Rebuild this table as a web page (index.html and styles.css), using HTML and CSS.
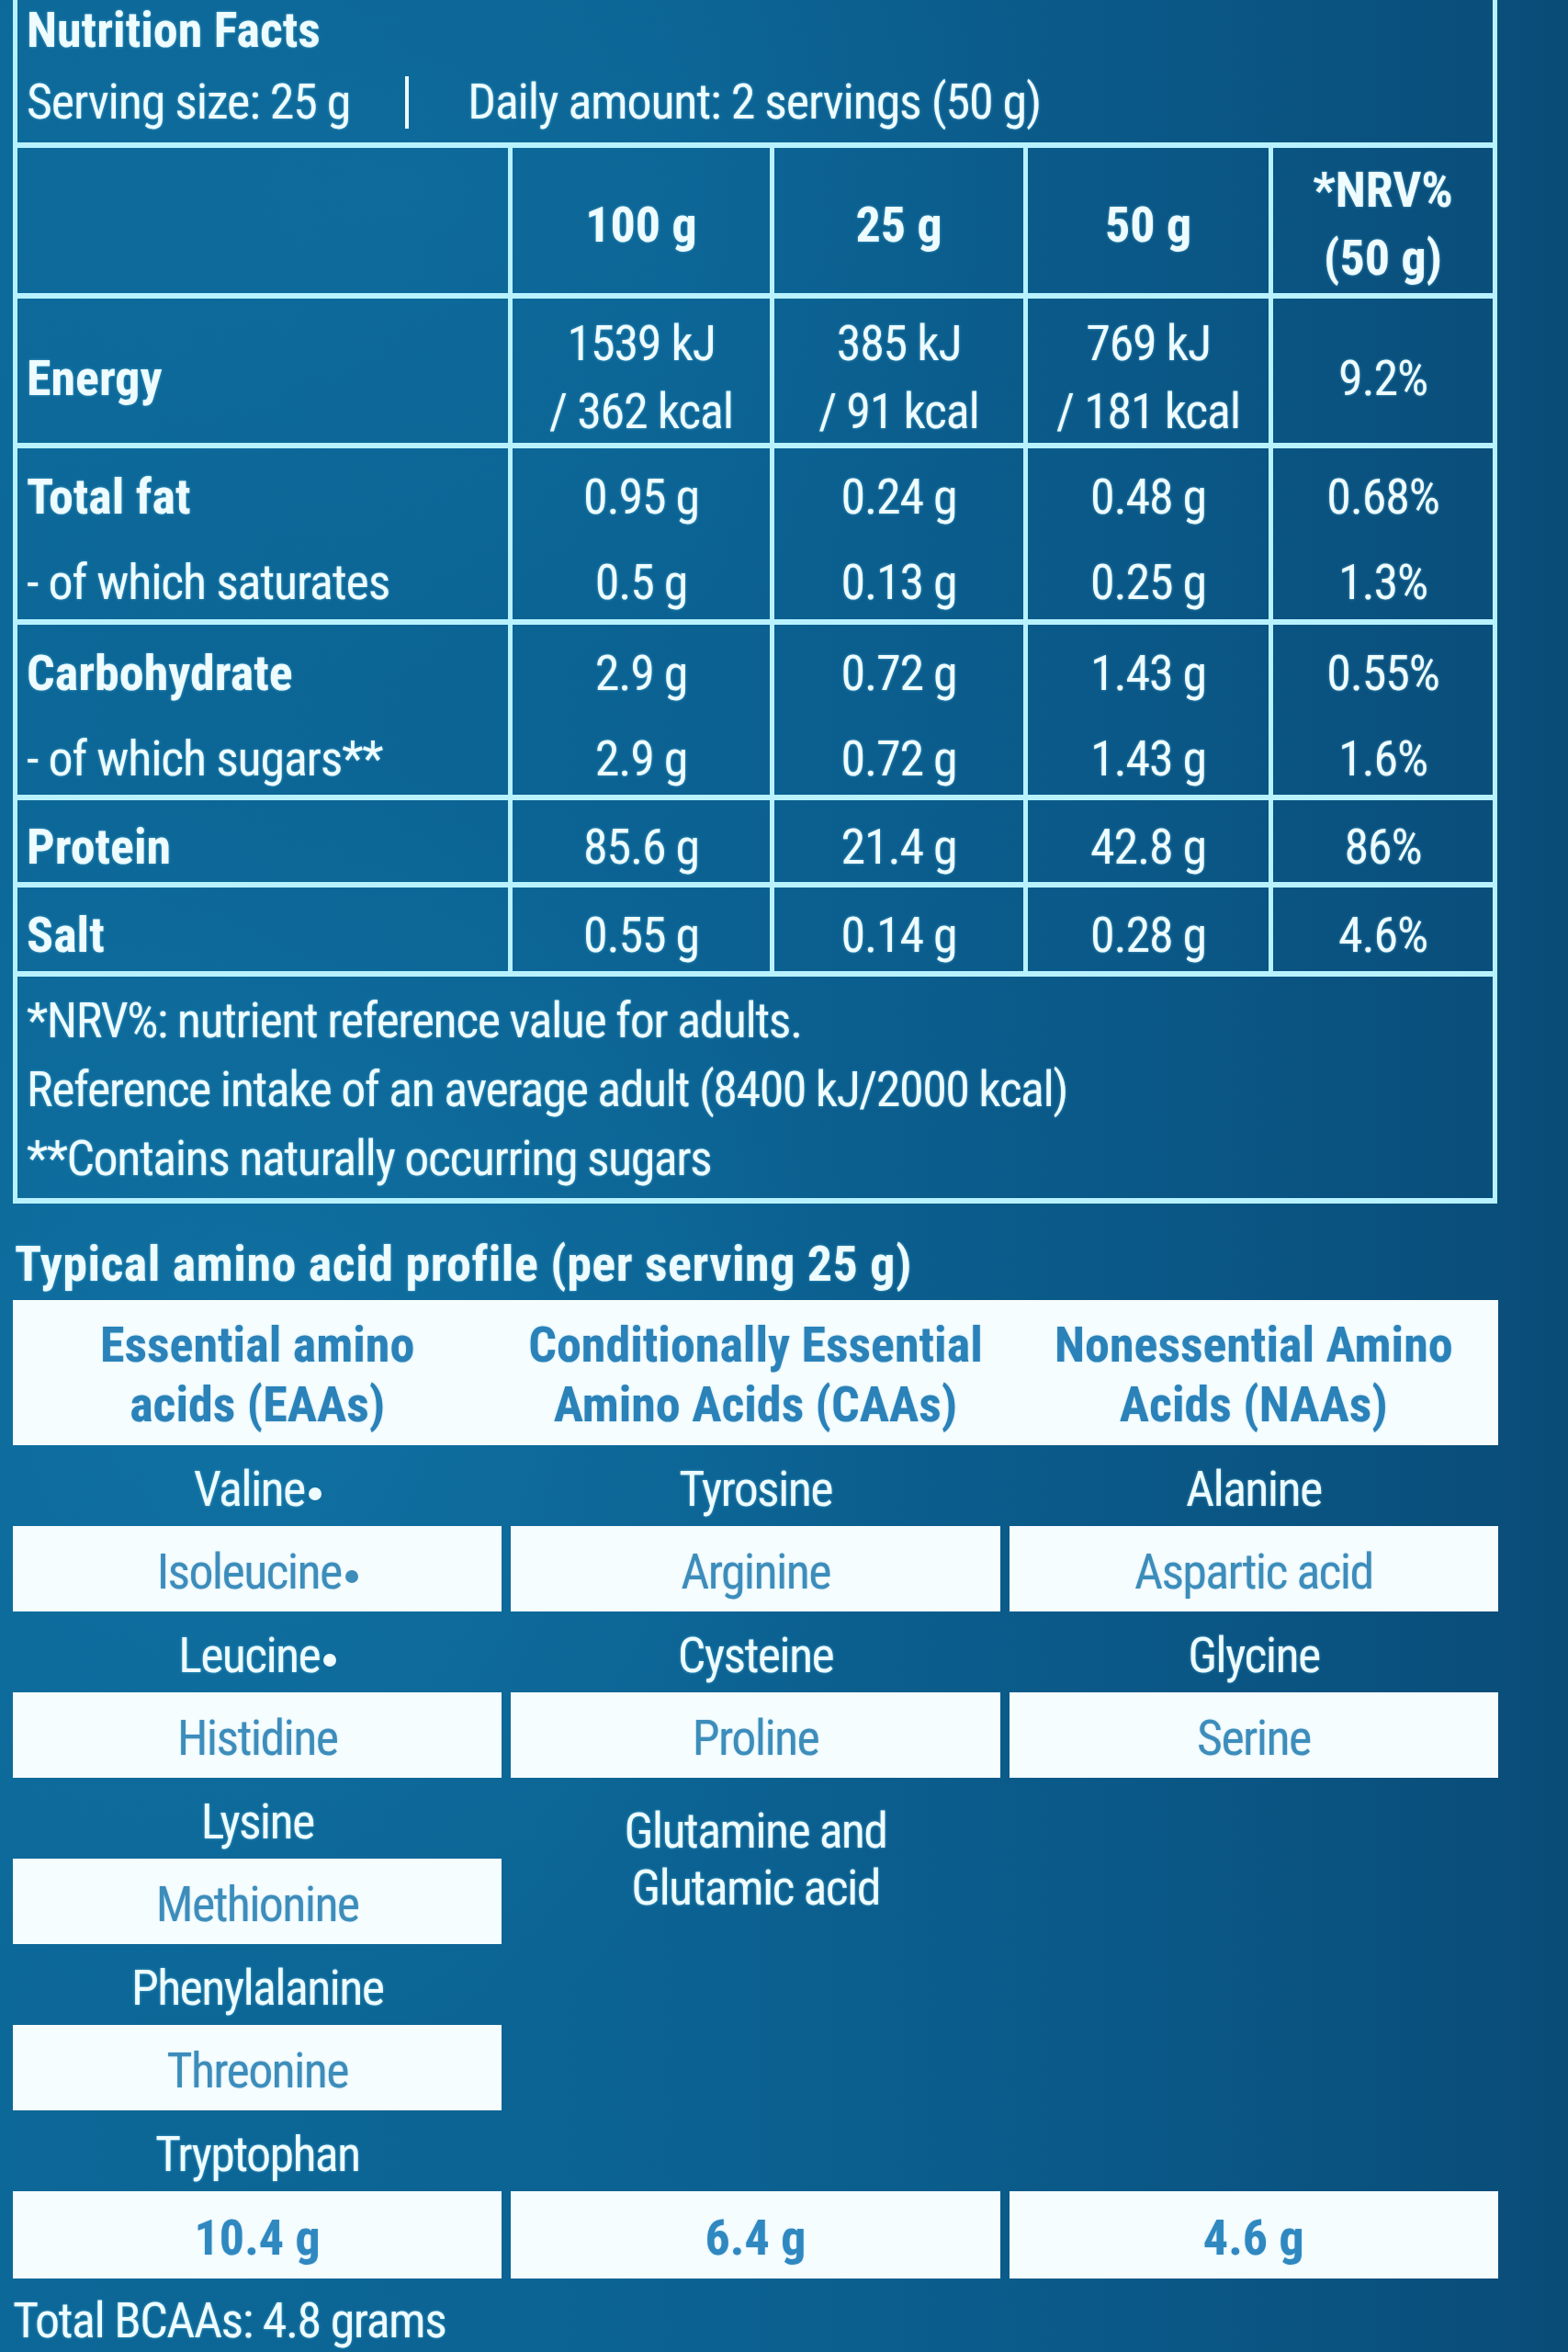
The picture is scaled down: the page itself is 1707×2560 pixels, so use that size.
FILE: index.html
```html
<!DOCTYPE html>
<html lang="en">
<head>
<meta charset="utf-8">
<title>Nutrition Facts</title>
<link rel="stylesheet" href="styles.css">
</head>
<body>
<div class="page">
  <section class="nf">
    <div class="nf-head">
      <div class="nf-title">Nutrition Facts</div>
      <div class="nf-serving">
        <span>Serving size: 25 g</span>
        <span class="sep"></span>
        <span>Daily amount: 2 servings (50 g)</span>
      </div>
    </div>

    <div class="row row-head">
      <div class="c lbl"></div>
      <div class="c b">100 g</div>
      <div class="c b">25 g</div>
      <div class="c b">50 g</div>
      <div class="c b two">*NRV%<br>(50 g)</div>
    </div>

    <div class="row row-energy">
      <div class="c lbl b">Energy</div>
      <div class="c two">1539 kJ<br>/ 362 kcal</div>
      <div class="c two">385 kJ<br>/ 91 kcal</div>
      <div class="c two">769 kJ<br>/ 181 kcal</div>
      <div class="c">9.2%</div>
    </div>

    <div class="grp">
      <div class="row sub sub-a">
        <div class="c lbl b">Total fat</div>
        <div class="c">0.95 g</div>
        <div class="c">0.24 g</div>
        <div class="c">0.48 g</div>
        <div class="c">0.68%</div>
      </div>
      <div class="row sub sub-a">
        <div class="c lbl">- of which saturates</div>
        <div class="c">0.5 g</div>
        <div class="c">0.13 g</div>
        <div class="c">0.25 g</div>
        <div class="c">1.3%</div>
      </div>
    </div>

    <div class="grp">
      <div class="row sub sub-a">
        <div class="c lbl b">Carbohydrate</div>
        <div class="c">2.9 g</div>
        <div class="c">0.72 g</div>
        <div class="c">1.43 g</div>
        <div class="c">0.55%</div>
      </div>
      <div class="row sub sub-b">
        <div class="c lbl">- of which sugars**</div>
        <div class="c">2.9 g</div>
        <div class="c">0.72 g</div>
        <div class="c">1.43 g</div>
        <div class="c">1.6%</div>
      </div>
    </div>

    <div class="row row-protein">
      <div class="c lbl b">Protein</div>
      <div class="c">85.6 g</div>
      <div class="c">21.4 g</div>
      <div class="c">42.8 g</div>
      <div class="c">86%</div>
    </div>

    <div class="row row-salt">
      <div class="c lbl b">Salt</div>
      <div class="c">0.55 g</div>
      <div class="c">0.14 g</div>
      <div class="c">0.28 g</div>
      <div class="c">4.6%</div>
    </div>

    <div class="nf-notes">
      <p>*NRV%: nutrient reference value for adults.</p>
      <p>Reference intake of an average adult (8400 kJ/2000 kcal)</p>
      <p>**Contains naturally occurring sugars</p>
    </div>
  </section>

  <section class="aa">
    <h2 class="aa-title">Typical amino acid profile (per serving 25 g)</h2>
    <div class="aa-grid">
      <div class="aa-head">
        <div class="aa-h">Essential amino<br>acids (EAAs)</div>
        <div class="aa-h">Conditionally Essential<br>Amino Acids (CAAs)</div>
        <div class="aa-h">Nonessential Amino<br>Acids (NAAs)</div>
      </div>

      <div class="t"><span>Valine<span class="dot"></span></span></div>
      <div class="t">Tyrosine</div>
      <div class="t">Alanine</div>

      <div class="box"><span>Isoleucine<span class="dot"></span></span></div>
      <div class="box">Arginine</div>
      <div class="box">Aspartic acid</div>

      <div class="t"><span>Leucine<span class="dot"></span></span></div>
      <div class="t">Cysteine</div>
      <div class="t">Glycine</div>

      <div class="box">Histidine</div>
      <div class="box">Proline</div>
      <div class="box">Serine</div>

      <div class="t">Lysine</div>
      <div class="t multi">Glutamine and<br>Glutamic acid</div>
      <div class="t"></div>

      <div class="box">Methionine</div>
      <div class="empty"></div>

      <div class="t">Phenylalanine</div>
      <div class="empty"></div>
      <div class="empty"></div>

      <div class="box">Threonine</div>
      <div class="empty"></div>
      <div class="empty"></div>

      <div class="t">Tryptophan</div>
      <div class="empty"></div>
      <div class="empty"></div>

      <div class="box val">10.4 g</div>
      <div class="box val">6.4 g</div>
      <div class="box val">4.6 g</div>
    </div>
    <p class="aa-total">Total BCAAs: 4.8 grams</p>
  </section>
</div>
</body>
</html>
```

FILE: styles.css
```css
html, body {
  margin: 0;
  padding: 0;
}

body {
  width: 1707px;
  height: 2560px;
  overflow: hidden;
  font-family: "Roboto Condensed", "Liberation Sans Narrow", "Roboto", "DejaVu Sans Condensed", sans-serif;
  font-stretch: condensed;
  font-size: 54px;
  letter-spacing: -1.2px;
  color: #eefcff;
  text-shadow: 0 0 3px rgba(140, 225, 255, 0.55);
  background:
    radial-gradient(ellipse 55% 40% at 18% 60%, rgba(22, 128, 178, 0.4), rgba(22, 128, 178, 0) 70%),
    radial-gradient(ellipse 60% 30% at 25% 8%, rgba(18, 120, 170, 0.3), rgba(18, 120, 170, 0) 70%),
    linear-gradient(90deg, #0c6898 0%, #0b6292 45%, #0a5786 75%, #0a4c78 100%);
}

.page {
  padding-left: 14px;
  width: 1616px;
}

/* ---------- Nutrition facts ---------- */
.nf {
  box-sizing: border-box;
  width: 1616px;
  border-left: 5px solid #b8f2ff;
  border-right: 5px solid #b8f2ff;
  border-bottom: 6px solid #b8f2ff;
}

.nf-head {
  box-sizing: border-box;
  height: 161px;
  padding: 1px 0 0 10px;
  border-bottom: 6px solid #b8f2ff;
}

.nf-title {
  font-weight: bold;
  letter-spacing: 0;
  line-height: 64px;
}

.nf-serving {
  display: flex;
  align-items: center;
  margin-top: 14px;
  line-height: 64px;
}

.sep {
  width: 4px;
  height: 57px;
  margin: 0 64px 0 60px;
  background: #eefcff;
}

.row {
  box-sizing: border-box;
  display: grid;
  grid-template-columns: 534px 285px 276px 267px 1fr;
  border-bottom: 6px solid #b8f2ff;
}

.grp {
  border-bottom: 6px solid #b8f2ff;
}

.grp .row {
  border-bottom: 0;
}

.c {
  box-sizing: border-box;
  display: flex;
  align-items: center;
  justify-content: center;
  text-align: center;
  border-left: 5px solid #b8f2ff;
  padding-top: 12px;
}

.c.lbl {
  border-left: 0;
  justify-content: flex-start;
  text-align: left;
  padding-left: 10px;
}

.b {
  font-weight: bold;
  letter-spacing: 0;
}

.row-head .c {
  padding-top: 8px;
}

.two {
  line-height: 74px;
}

.row-head { height: 164px; }
.row-energy { height: 163px; }
.sub-a { height: 93px; }
.sub-b { height: 92px; }
.row-protein { height: 95px; }
.row-salt { height: 97px; }

.nf-notes {
  box-sizing: border-box;
  height: 241px;
  padding: 10px 0 0 10px;
  letter-spacing: -1.5px;
}

.nf-notes p {
  margin: 0;
  line-height: 75px;
}

/* ---------- Amino acid profile ---------- */
.aa {
  padding-top: 34px;
}

.aa-title {
  margin: 0;
  font-size: 54px;
  font-weight: bold;
  letter-spacing: 0.5px;
  line-height: 64px;
  padding-left: 2px;
}

.aa-grid {
  margin-top: 7px;
  width: 1617px;
  display: grid;
  grid-template-columns: repeat(3, 1fr);
  column-gap: 10px;
  grid-template-rows: 158px 88px 93px 88px 93px 88px 93px 88px 93px 88px 95px;
  letter-spacing: -1.7px;
}

.aa-head {
  grid-column: 1 / -1;
  display: grid;
  grid-template-columns: repeat(3, 1fr);
  column-gap: 10px;
  background: #f6fdff;
}

.aa-h {
  display: flex;
  align-items: center;
  justify-content: center;
  text-align: center;
  font-weight: bold;
  letter-spacing: 0;
  line-height: 65px;
  color: #2a82b9;
  text-shadow: 0 0 2px rgba(60, 150, 200, 0.45);
  padding-top: 4px;
}

.t {
  display: flex;
  align-items: center;
  justify-content: center;
  text-align: center;
  padding-top: 6px;
}

.t.multi {
  grid-row: span 2;
  align-items: flex-start;
  line-height: 62px;
  padding-top: 27px;
}

.box {
  display: flex;
  align-items: center;
  justify-content: center;
  background: #f6fdff;
  color: #3d8dbb;
  text-shadow: 0 0 2px rgba(70, 150, 200, 0.4);
  padding-top: 6px;
}

.box.val {
  font-weight: bold;
  letter-spacing: 0;
  color: #2f88c0;
}

.dot {
  display: inline-block;
  width: 14px;
  height: 14px;
  margin-left: 4px;
  border-radius: 50%;
  background: currentColor;
  position: relative;
  top: -6px;
}

.aa-total {
  margin: 14px 0 0;
  line-height: 64px;
  letter-spacing: -1.5px;
}
```
